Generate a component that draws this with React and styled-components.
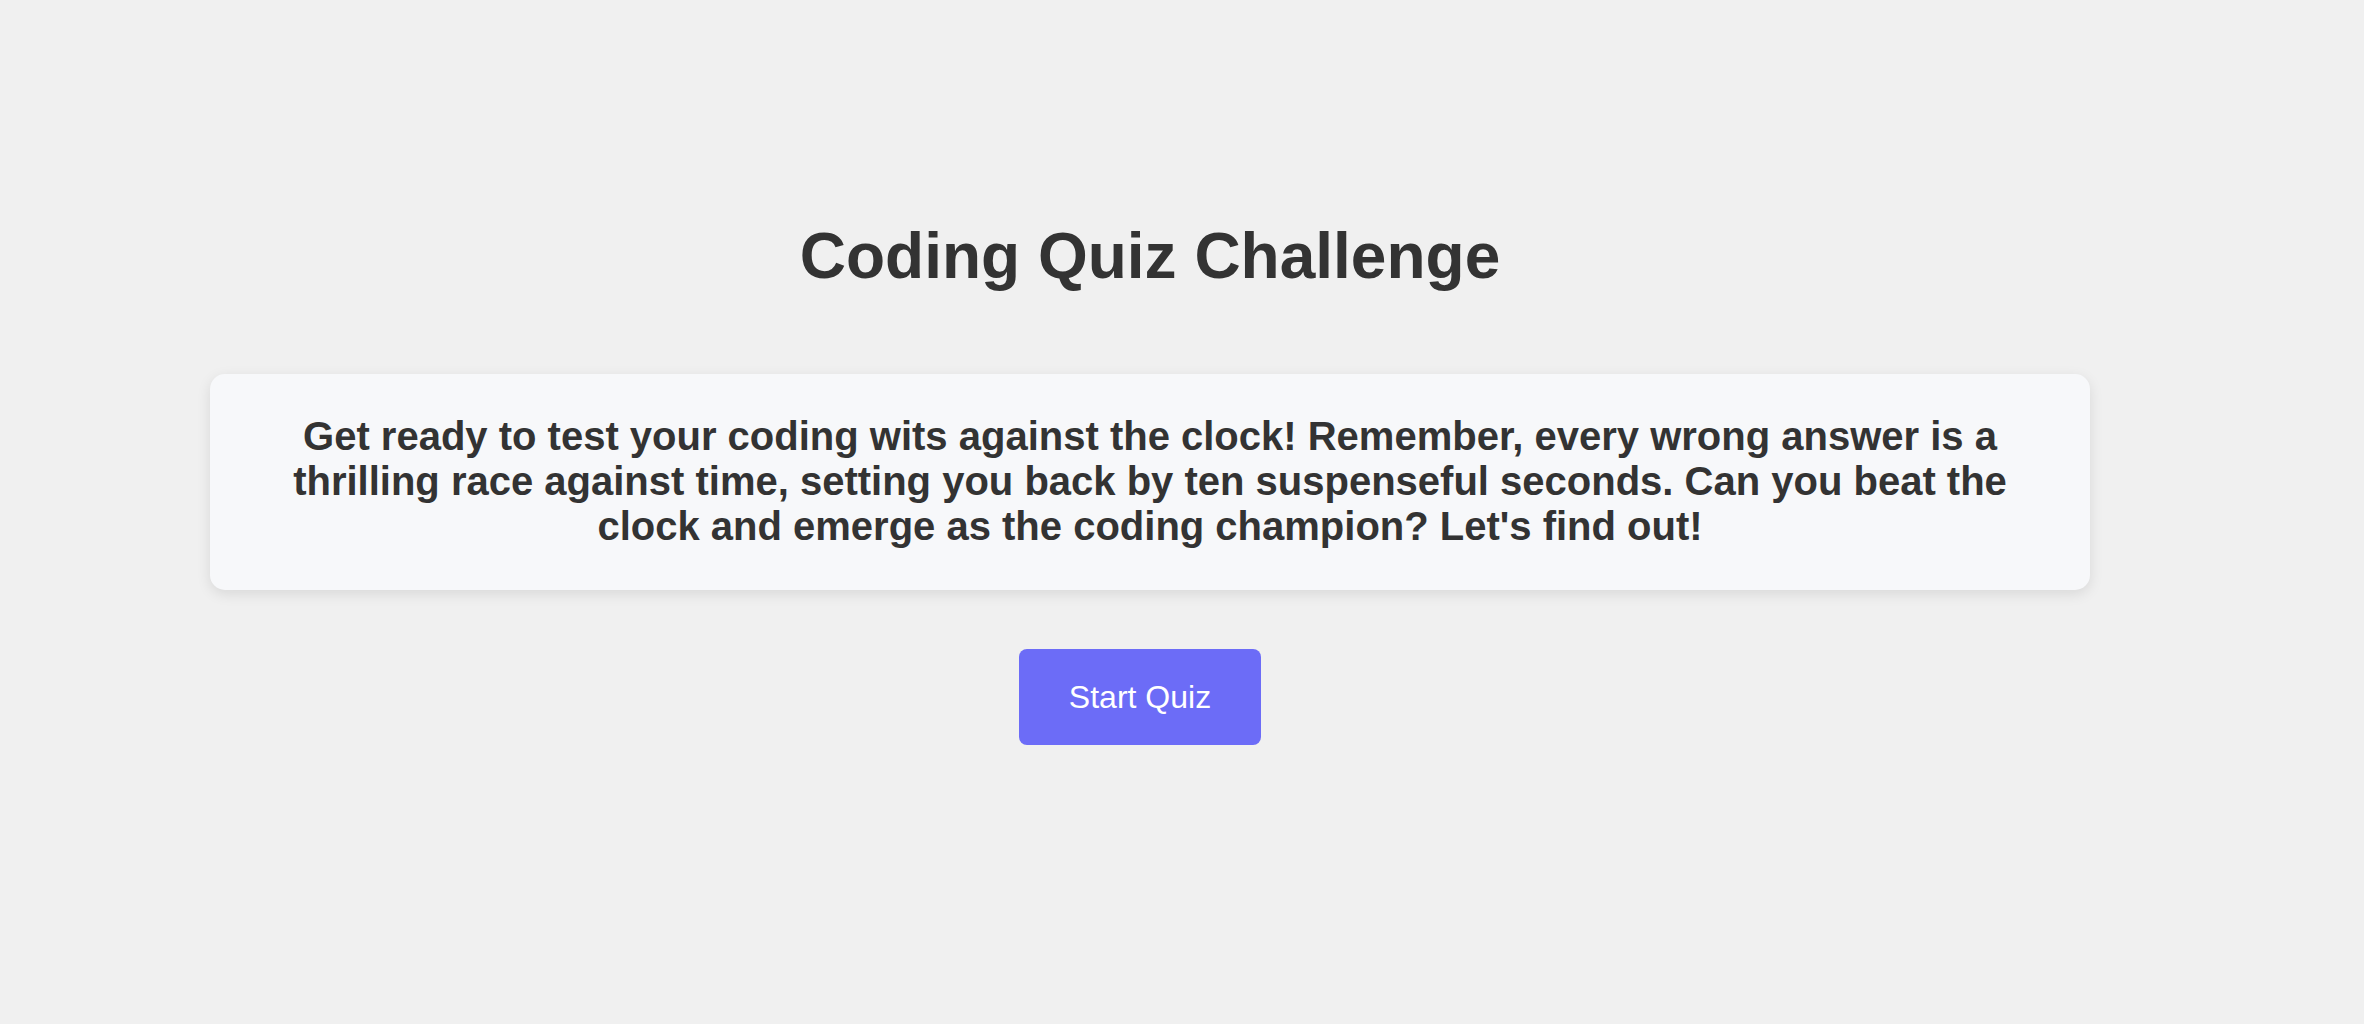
import React from "react";
import styled, { createGlobalStyle } from "styled-components";

const GlobalStyle = createGlobalStyle`
  html, body {
    margin: 0;
    padding: 0;
    background: #f0f0f0;
    font-family: "Liberation Sans", Arial, sans-serif;
    color: #333333;
  }
`;

const Page = styled.main`
  box-sizing: border-box;
  min-height: 1024px;
  padding: 219px 274px 0 210px;
  display: flex;
  flex-direction: column;
  align-items: stretch;
`;

const Title = styled.h1`
  margin: 0 0 81px;
  text-align: center;
  font-size: 64px;
  font-weight: 700;
  line-height: normal;
  color: #333333;
`;

const Card = styled.section`
  box-sizing: border-box;
  background: #f7f8fa;
  border-radius: 15px;
  box-shadow: 0 4px 14px rgba(0, 0, 0, 0.1);
  padding: 40px 70px 41px;
  text-align: center;
`;

const Intro = styled.p`
  margin: 0;
  font-size: 40px;
  font-weight: 700;
  line-height: normal;
  color: #333333;
`;

const Actions = styled.div`
  display: flex;
  justify-content: center;
  margin-top: 59px;
`;

const StartButton = styled.button`
  box-sizing: border-box;
  width: 242px;
  height: 96px;
  margin-right: 20px;
  border: none;
  border-radius: 8px;
  background: #6c6cf7;
  color: #ffffff;
  font-family: "Liberation Sans", Arial, sans-serif;
  font-size: 32px;
  cursor: pointer;
`;

export default function App() {
  return (
    <>
      <GlobalStyle />
      <Page>
        <Title>Coding Quiz Challenge</Title>
        <Card>
          <Intro>
            Get ready to test your coding wits against the clock! Remember, every wrong answer is a
            thrilling race against time, setting you back by ten suspenseful seconds. Can you beat the
            clock and emerge as the coding champion? Let's find out!
          </Intro>
        </Card>
        <Actions>
          <StartButton>Start Quiz</StartButton>
        </Actions>
      </Page>
    </>
  );
}
